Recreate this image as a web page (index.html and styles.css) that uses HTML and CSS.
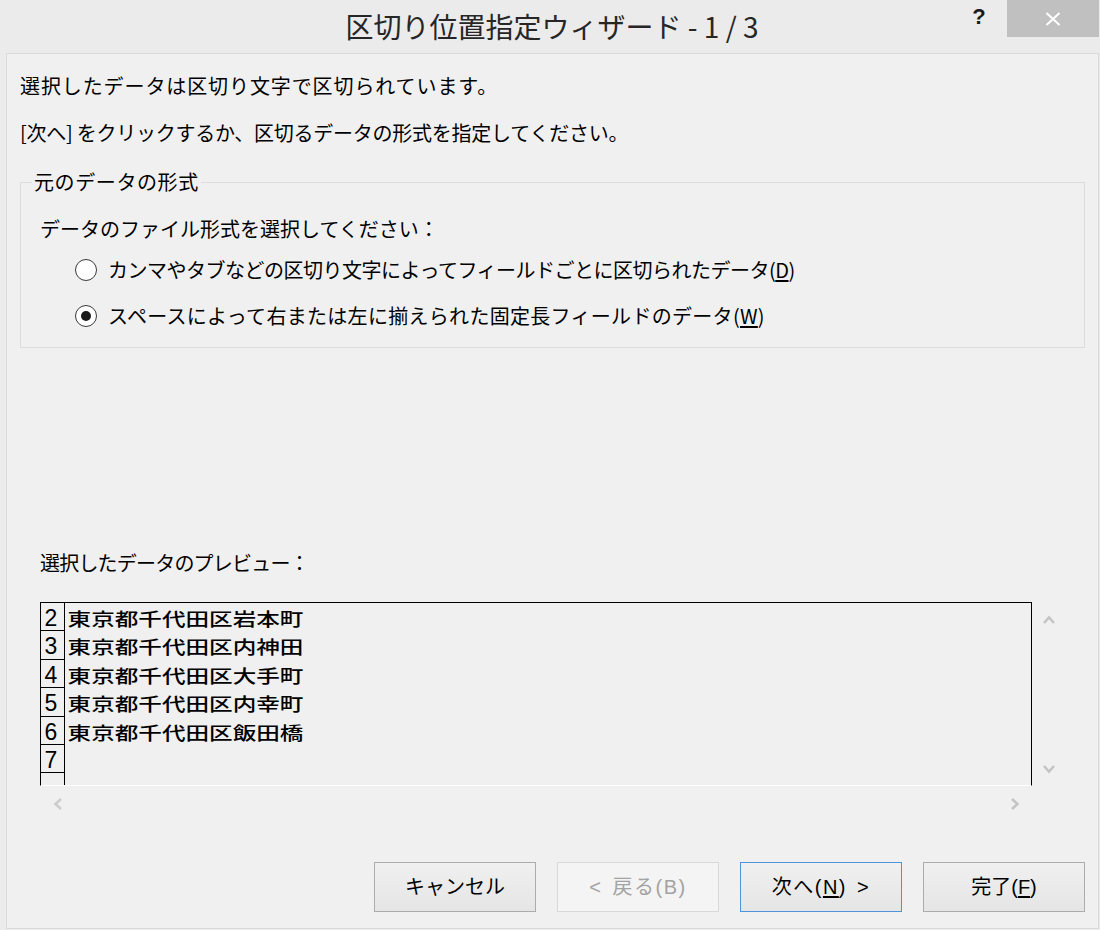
FILE: index.html
```html
<!DOCTYPE html>
<html lang="ja">
<head>
<meta charset="utf-8">
<title>区切り位置指定ウィザード - 1 / 3</title>
<link rel="stylesheet" href="styles.css">
</head>
<body>
<div class="window">
  <div class="titlebar">
    <div class="tb-side"></div>
    <div class="tb-title">区切り位置指定ウィザード - 1 / 3</div>
    <div class="tb-side tb-controls">
      <span class="tb-help">?</span>
      <span class="tb-close">
        <svg width="16" height="14" viewBox="0 0 16 14"><path d="M1.5 1 L14.5 13 M14.5 1 L1.5 13" stroke="#ffffff" stroke-width="2" fill="none"/></svg>
      </span>
    </div>
  </div>
  <div class="client">
    <p class="line line1">選択したデータは区切り文字で区切られています。</p>
    <p class="line line2">[次へ] をクリックするか、区切るデータの形式を指定してください。</p>
    <fieldset class="group">
      <legend class="group-legend">元のデータの形式</legend>
      <p class="line prompt">データのファイル形式を選択してください：</p>
      <div class="radio-row row-a">
        <span class="radio"></span>
        <span class="line">カンマやタブなどの区切り文字によってフィールドごとに区切られたデータ(<u>D</u>)</span>
      </div>
      <div class="radio-row row-b">
        <span class="radio checked"><span class="dot"></span></span>
        <span class="line">スペースによって右または左に揃えられた固定長フィールドのデータ(<u>W</u>)</span>
      </div>
    </fieldset>
    <p class="line preview-label">選択したデータのプレビュー：</p>
    <div class="preview">
      <div class="preview-box">
        <div class="prow"><span class="pnum">2</span><span class="ptext">東京都千代田区岩本町</span></div>
        <div class="prow"><span class="pnum">3</span><span class="ptext">東京都千代田区内神田</span></div>
        <div class="prow"><span class="pnum">4</span><span class="ptext">東京都千代田区大手町</span></div>
        <div class="prow"><span class="pnum">5</span><span class="ptext">東京都千代田区内幸町</span></div>
        <div class="prow"><span class="pnum">6</span><span class="ptext">東京都千代田区飯田橋</span></div>
        <div class="prow"><span class="pnum">7</span><span class="ptext"></span></div>
        <div class="prow"><span class="pnum"></span><span class="ptext"></span></div>
      </div>
      <div class="vscroll">
        <span class="arrow"><svg width="12" height="9" viewBox="0 0 12 9"><polyline points="1,8 6,2.5 11,8" fill="none" stroke="#c4c4c4" stroke-width="2.6"/></svg></span>
        <span class="arrow"><svg width="12" height="9" viewBox="0 0 12 9"><polyline points="1,1 6,6.5 11,1" fill="none" stroke="#c4c4c4" stroke-width="2.6"/></svg></span>
      </div>
      <div class="hscroll">
        <span class="arrow"><svg width="9" height="12" viewBox="0 0 9 12"><polyline points="8,1 2.5,6 8,11" fill="none" stroke="#cccccc" stroke-width="2.6"/></svg></span>
        <span class="arrow"><svg width="9" height="12" viewBox="0 0 9 12"><polyline points="1,1 6.5,6 1,11" fill="none" stroke="#c4c4c4" stroke-width="2.6"/></svg></span>
      </div>
      <div class="corner"></div>
    </div>
    <div class="buttons">
      <button class="btn">キャンセル</button>
      <button class="btn disabled wide">&lt; 戻る(B)</button>
      <button class="btn default wide">次へ(<u>N</u>) &gt;</button>
      <button class="btn">完了(<u>F</u>)</button>
    </div>
  </div>
</div>
</body>
</html>
```

FILE: styles.css
```css
* { box-sizing: border-box; }

html, body {
  margin: 0;
  padding: 0;
  background: #ebebeb;
}

body {
  font-family: "Noto Sans CJK JP", "Noto Sans", sans-serif;
  color: #000;
}

.window {
  width: 1100px;
  height: 930px;
  display: flex;
  flex-direction: column;
  background: #ebebeb;
}

.titlebar {
  height: 53px;
  display: grid;
  grid-template-columns: 1fr auto 1fr;
  align-items: start;
}

.tb-title {
  font-size: 28px;
  line-height: 53px;
  color: #262626;
  white-space: nowrap;
  padding-left: 4px;
}

.tb-controls {
  display: flex;
  justify-content: flex-end;
  align-items: flex-start;
}

.tb-help {
  font-family: "Liberation Sans", sans-serif;
  font-weight: bold;
  font-size: 22px;
  line-height: 34px;
  width: 24px;
  text-align: center;
  margin-right: 16px;
  color: #1a1a1a;
}

.tb-close {
  width: 92px;
  height: 37px;
  margin-right: 1px;
  background: #c0c0c0;
  display: flex;
  align-items: center;
  justify-content: center;
}

.client {
  height: 876px;
  margin: 0 1px 1px 6px;
  border: 1px solid #dadada;
  background: #f0f0f0;
  padding: 18px 13px 16px;
  display: flex;
  flex-direction: column;
}

.line {
  margin: 0;
  font-size: 20px;
  line-height: 28px;
  white-space: nowrap;
}

.line1 { letter-spacing: 0.9px; }
.line2 { margin-top: 19px; letter-spacing: -0.25px; }

.group {
  margin: 21px 0 0;
  padding: 19px 19px 17px;
  border: 1px solid #dcdcdc;
  min-width: 0;
}

.group-legend {
  margin-left: -8px;
  padding: 0 2px;
  font-size: 20px;
  line-height: 28px;
  letter-spacing: 0.6px;
}

.prompt { margin: 0; }

.radio-row {
  display: flex;
  align-items: center;
  height: 28px;
  margin-left: 35px;
}

.row-a { margin-top: 13px; letter-spacing: -0.5px; }
.row-b { margin-top: 18px; letter-spacing: 0.3px; }

.radio {
  width: 22px;
  height: 22px;
  border: 1px solid #3a3a3a;
  border-radius: 50%;
  background: #ffffff;
  margin-right: 11px;
  display: flex;
  align-items: center;
  justify-content: center;
  flex: none;
}

.radio .dot {
  width: 10px;
  height: 10px;
  border-radius: 50%;
  background: #1a1a1a;
}

u {
  text-decoration-thickness: 2px;
  text-underline-offset: 2px;
}

.preview-label {
  margin-top: 201px;
  margin-left: 20px;
  letter-spacing: -0.8px;
}

.preview {
  margin: 25px 0 0 20px;
  display: grid;
  grid-template-columns: 992px 34px;
  grid-template-rows: 184px 35px;
}

.preview-box {
  border: 1px solid #000;
  border-bottom: 1px solid #ffffff;
  overflow: hidden;
}

.prow {
  display: flex;
  height: 28.4px;
}

.pnum {
  width: 24px;
  flex: none;
  border-right: 1px solid #000;
  border-bottom: 1px solid #000;
  font-family: "Liberation Sans", sans-serif;
  font-size: 23px;
  line-height: 25px;
  padding-top: 3px;
  padding-right: 3px;
  text-align: center;
  color: #000;
}

.ptext {
  display: inline-block;
  padding-top: 3px;
  padding-left: 2px;
  font-size: 18px;
  line-height: 24px;
  transform: scaleX(1.31);
  transform-origin: left center;
  white-space: nowrap;
  color: #000;
  font-weight: 500;
}

.vscroll {
  display: flex;
  flex-direction: column;
  justify-content: space-between;
}

.vscroll .arrow {
  height: 34px;
  display: flex;
  align-items: center;
  justify-content: center;
}

.hscroll {
  display: flex;
  justify-content: space-between;
  align-items: center;
}

.hscroll .arrow {
  width: 34px;
  height: 35px;
  display: flex;
  align-items: center;
  justify-content: center;
}

.buttons {
  margin-top: auto;
  display: flex;
  justify-content: flex-end;
  gap: 21px;
}

.btn {
  width: 162px;
  height: 50px;
  border: 1px solid #acacac;
  background: linear-gradient(#f0f0f0, #e5e5e5);
  font-family: "Liberation Sans", "Noto Sans CJK JP", sans-serif;
  font-size: 20px;
  color: #000;
  padding: 0;
  line-height: 28px;
}

.btn.wide {
  letter-spacing: 1.5px;
  word-spacing: 3px;
}

.btn.disabled {
  border-color: #d9d9d9;
  background: #f4f4f4;
  color: #a3a3a3;
}

.btn.default {
  border-color: #4d94d8;
}
```
